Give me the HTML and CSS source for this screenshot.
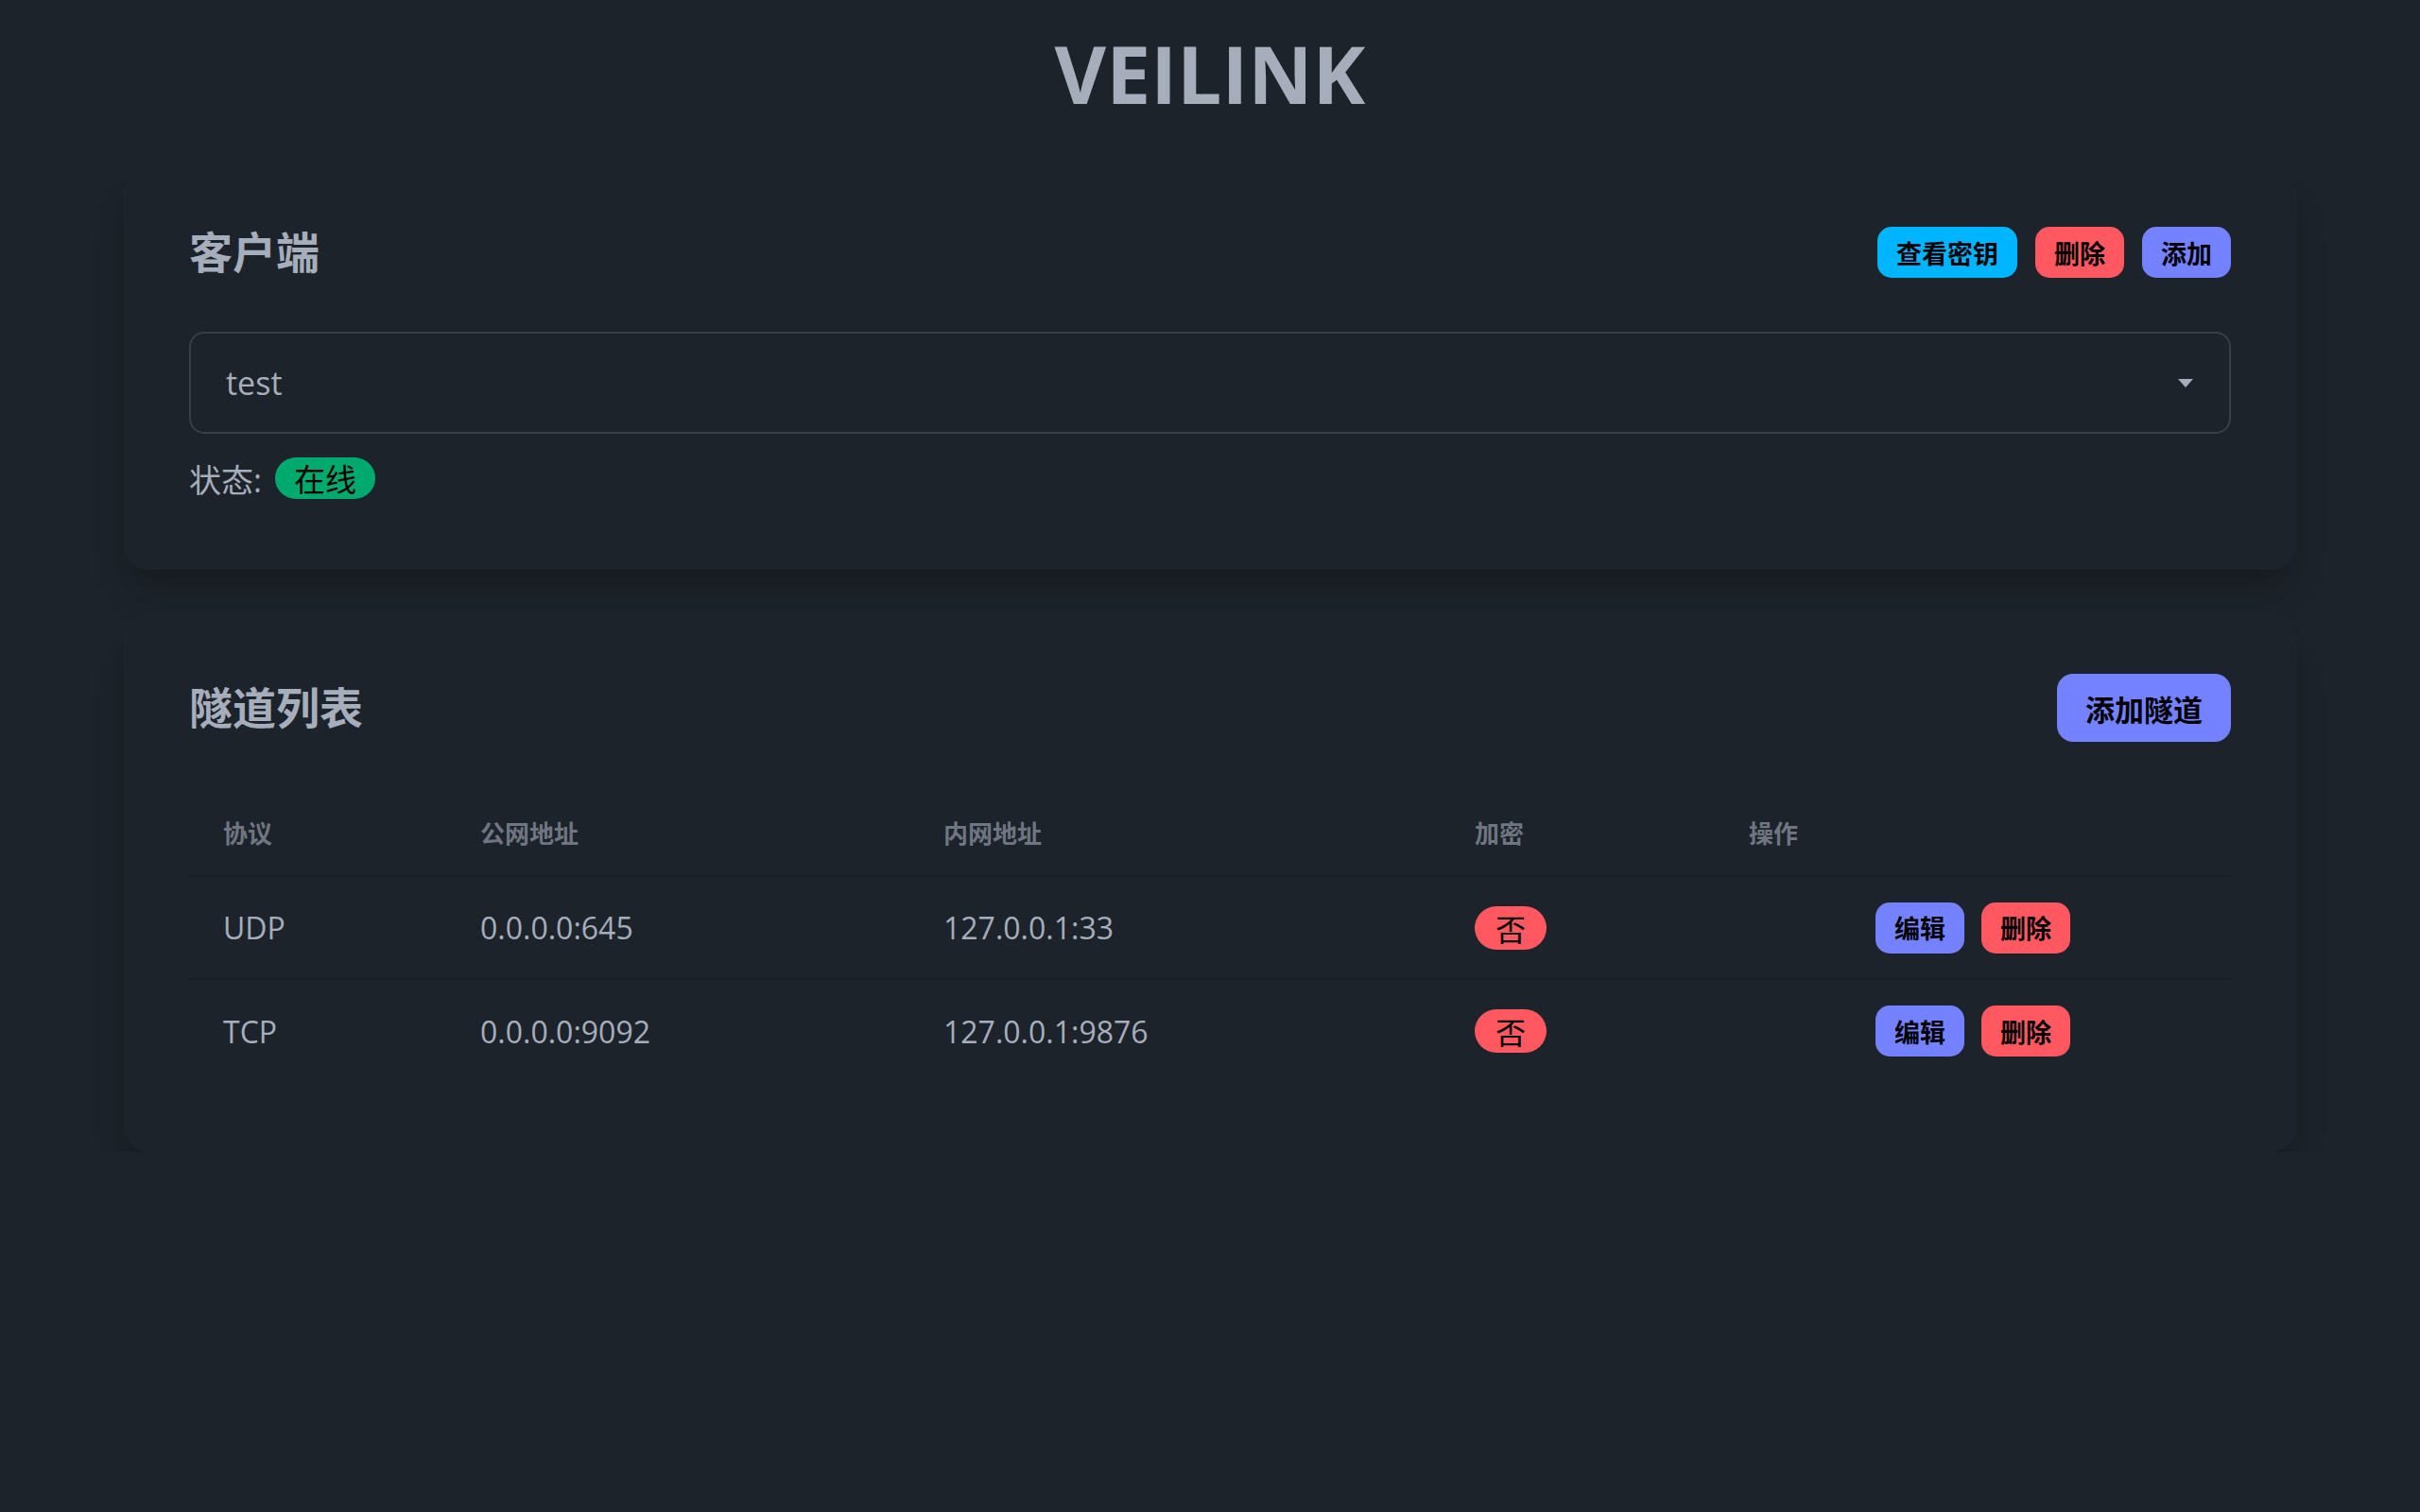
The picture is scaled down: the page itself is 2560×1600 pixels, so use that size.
FILE: index.html
```html
<!DOCTYPE html>
<html lang="zh-CN">
<head>
<meta charset="utf-8">
<title>VEILINK</title>
<link rel="stylesheet" href="styles.css">
</head>
<body>
<main class="page">
  <h1 class="brand">VEILINK</h1>

  <section class="card card-client">
    <div class="card-head">
      <h2 class="card-title">客户端</h2>
      <div class="actions">
        <button class="btn btn-sm btn-info">查看密钥</button>
        <button class="btn btn-sm btn-error">删除</button>
        <button class="btn btn-sm btn-primary">添加</button>
      </div>
    </div>
    <div class="select">
      <span class="select-value">test</span>
      <svg class="select-arrow" width="16" height="9" viewBox="0 0 16 9"><path d="M0 0 H16 L8 9 Z" fill="#a6adbb"/></svg>
    </div>
    <div class="status">
      <span class="status-label">状态:</span>
      <span class="badge badge-success">在线</span>
    </div>
  </section>

  <section class="card card-tunnels">
    <div class="card-head card-head-lg">
      <h2 class="card-title">隧道列表</h2>
      <button class="btn btn-md btn-primary">添加隧道</button>
    </div>
    <table class="table">
      <colgroup>
        <col class="c1"><col class="c2"><col class="c3"><col class="c4"><col class="c5">
      </colgroup>
      <thead>
        <tr><th>协议</th><th>公网地址</th><th>内网地址</th><th>加密</th><th>操作</th></tr>
      </thead>
      <tbody>
        <tr>
          <td>UDP</td><td>0.0.0.0:645</td><td>127.0.0.1:33</td>
          <td><span class="badge badge-error">否</span></td>
          <td><div class="row-actions"><button class="btn btn-sm btn-primary">编辑</button><button class="btn btn-sm btn-error">删除</button></div></td>
        </tr>
        <tr>
          <td>TCP</td><td>0.0.0.0:9092</td><td>127.0.0.1:9876</td>
          <td><span class="badge badge-error">否</span></td>
          <td><div class="row-actions"><button class="btn btn-sm btn-primary">编辑</button><button class="btn btn-sm btn-error">删除</button></div></td>
        </tr>
      </tbody>
    </table>
  </section>
</main>
</body>
</html>
```

FILE: styles.css
```css
* { box-sizing: border-box; }

html, body {
  margin: 0;
  background: #1d232a;
  color: #a6adbb;
  font-family: "Open Sans", "Noto Sans CJK SC", sans-serif;
}

.page {
  width: 2300px;
  margin: 0 auto;
  padding-top: 27px;
}

.brand {
  margin: 0;
  text-align: center;
  font-size: 84px;
  line-height: 102px;
  font-weight: 700;
  color: #a6adbb;
}

.card {
  background: #1d232a;
  border-radius: 28px;
  box-shadow: 0 34px 42px -8px rgba(0, 0, 0, 0.14), 0 14px 17px -10px rgba(0, 0, 0, 0.14);
  padding: 64px 70px;
}

.card-client {
  margin-top: 46px;
  padding-top: 57px;
  padding-bottom: 72px;
}

.card-tunnels {
  margin-top: 46px;
  padding-bottom: 74px;
}

.card-head {
  display: flex;
  align-items: center;
  justify-content: space-between;
  height: 70px;
}

.card-head-lg { height: 72px; }

.card-title {
  margin: 0;
  font-size: 46px;
  font-weight: 700;
  line-height: 1.2;
  color: #a6adbb;
}

.actions {
  display: flex;
  gap: 19px;
}

.btn {
  border: none;
  font-family: "Open Sans", "Noto Sans CJK SC", sans-serif;
  font-weight: 700;
  color: #000;
  cursor: pointer;
  display: inline-flex;
  align-items: center;
  justify-content: center;
}

.btn-sm {
  height: 54px;
  padding: 0 20px;
  font-size: 27px;
  border-radius: 15px;
}

.btn-md {
  height: 72px;
  padding: 0 30px;
  font-size: 31px;
  border-radius: 17px;
}

.btn-info { background: #00b5ff; }
.btn-error { background: #ff5861; }
.btn-primary { background: #7582ff; }

.select {
  margin-top: 49px;
  height: 108px;
  border: 2px solid rgba(166, 173, 187, 0.2);
  border-radius: 16px;
  display: flex;
  align-items: center;
  justify-content: space-between;
  padding: 0 38px 0 37px;
}

.select-value {
  font-size: 34px;
  color: #a6adbb;
}

.status {
  margin-top: 22px;
  display: flex;
  align-items: center;
  height: 50px;
  font-size: 34px;
}

.status-label { margin-right: 14px; }

.badge {
  display: inline-flex;
  align-items: center;
  justify-content: center;
  border-radius: 999px;
  color: #000;
  font-weight: 400;
}

.badge-success {
  background: #00a96e;
  height: 44px;
  padding: 0 20px;
  font-size: 33px;
}

.badge-error {
  background: #ff5861;
  height: 46px;
  padding: 0 22px;
  font-size: 32px;
}

.table {
  margin-top: 50px;
  width: 100%;
  border-collapse: collapse;
  table-layout: fixed;
}

.c1 { width: 272px; }
.c2 { width: 490px; }
.c3 { width: 562px; }
.c4 { width: 290px; }

.table th {
  text-align: left;
  font-size: 26px;
  font-weight: 700;
  color: #6f7681;
  height: 92px;
  padding: 0 36px;
  border-bottom: 2px solid #191e24;
}

.table td {
  height: 109px;
  padding: 0 36px;
  font-size: 32px;
  color: #a6adbb;
}

.table tbody tr + tr td { border-top: 2px solid #191e24; }

.row-actions {
  display: flex;
  justify-content: center;
  gap: 18px;
}
```
